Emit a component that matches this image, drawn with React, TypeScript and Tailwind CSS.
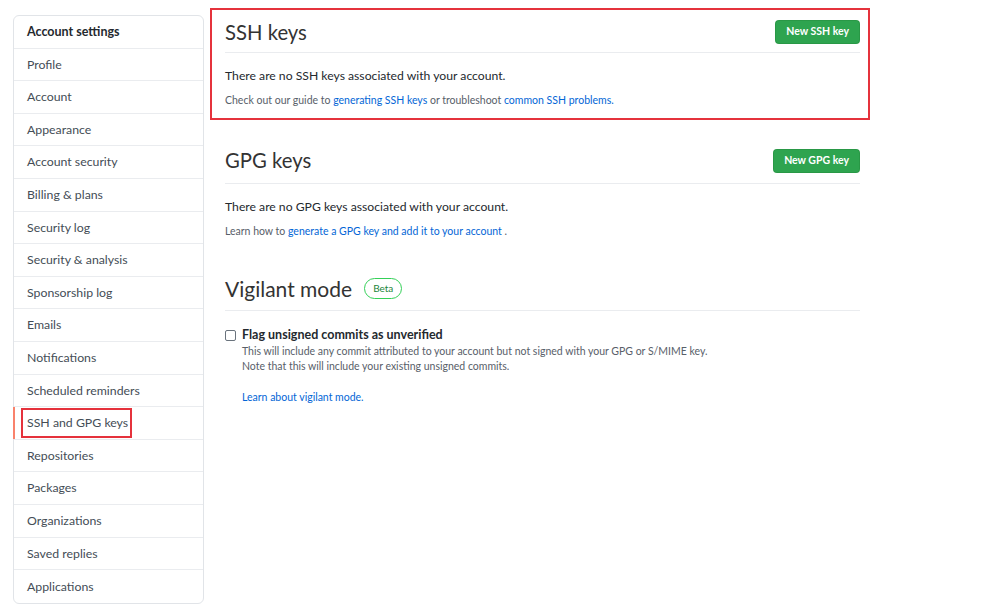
import React from "react";

const navItems = [
  "Profile",
  "Account",
  "Appearance",
  "Account security",
  "Billing & plans",
  "Security log",
  "Security & analysis",
  "Sponsorship log",
  "Emails",
  "Notifications",
  "Scheduled reminders",
  "SSH and GPG keys",
  "Repositories",
  "Packages",
  "Organizations",
  "Saved replies",
  "Applications",
];

const Sidebar = () => (
  <nav className="mt-[15px] ml-[13px] w-[191px] shrink-0 self-start rounded-[6px] border border-[#e1e4e8] bg-white">
    <div className="flex h-[32.6px] items-center border-b border-[#eaecef] px-[13px] pt-[1px] text-[12.5px] font-bold text-[#24292e]">
      Account settings
    </div>
    {navItems.map((item, i) => {
      const active = item === "SSH and GPG keys";
      const last = i === navItems.length - 1;
      return (
        <div
          key={item}
          className={`relative flex h-[32.6px] items-center px-[13px] pt-[1px] text-[12.3px] text-[#444d56] ${
            last ? "" : "border-b border-[#eaecef]"
          }`}
        >
          {active && (
            <>
              <span className="absolute -left-px top-0 bottom-0 w-[2px] bg-[#f9826c]" />
              <span className="absolute left-[7px] top-[1px] h-[30px] w-[111px] border-2 border-[#e5323c]" />
            </>
          )}
          {item}
        </div>
      );
    })}
  </nav>
);

const GreenButton = ({ label }: { label: string }) => (
  <button className="h-[24px] rounded-[4px] border border-[#22863a]/40 bg-[#2ea44f] px-[10px] text-[10.5px] font-bold text-white">
    {label}
  </button>
);

const link = "text-[#0366d6]";

const App = () => {
  return (
    <div
      className="flex min-h-[610px] w-[990px] bg-white text-[#24292e]"
      style={{ fontFamily: 'Lato, "Noto Sans", sans-serif' }}
    >
      <Sidebar />

      <main className="ml-[6px] w-[660px] pt-[8px]">
        {/* SSH keys */}
        <section className="border-2 border-[#e5323c] pl-[13px] pr-[8px] pb-[9px]">
          <div className="flex h-[43px] items-center justify-between border-b border-[#eaecef] pt-[2px]">
            <h2 className="text-[20.3px] font-normal text-[#333]">SSH keys</h2>
            <GreenButton label="New SSH key" />
          </div>
          <p className="mt-[13px] text-[12.2px] leading-[20px]">
            There are no SSH keys associated with your account.
          </p>
          <p className="mt-[5px] text-[10.5px] leading-[18px] text-[#586069]">
            Check out our guide to <span className={link}>generating SSH keys</span> or troubleshoot{" "}
            <span className={link}>common SSH problems</span>
            <span className={link}>.</span>
          </p>
        </section>

        {/* GPG keys */}
        <section className="pl-[15px] pr-[10px]">
          <div className="mt-[18px] flex h-[46px] items-center justify-between border-b border-[#eaecef]">
            <h2 className="text-[20.3px] font-normal text-[#333]">GPG keys</h2>
            <GreenButton label="New GPG key" />
          </div>
          <p className="mt-[13px] text-[12.2px] leading-[20px]">
            There are no GPG keys associated with your account.
          </p>
          <p className="mt-[5px] text-[10.5px] leading-[18px] text-[#586069]">
            Learn how to <span className={link}>generate a GPG key and add it to your account</span> .
          </p>
        </section>

        {/* Vigilant mode */}
        <section className="pl-[15px] pr-[10px]">
          <div className="mt-[27px] flex h-[44px] items-center gap-[12px] border-b border-[#eaecef]">
            <h2 className="text-[21px] font-normal text-[#333]">Vigilant mode</h2>
            <span className="flex h-[21px] items-center rounded-full border border-[#34d058] px-[8px] text-[10px] text-[#22863a]">
              Beta
            </span>
          </div>
          <div className="mt-[15px] flex gap-[6px]">
            <span className="mt-[4px] h-[11px] w-[11px] shrink-0 rounded-[2px] border border-[#6a737d] bg-white" />
            <div>
              <div className="text-[12.5px] font-bold leading-[18px]">
                Flag unsigned commits as unverified
              </div>
              <div className="text-[10.5px] leading-[15px] text-[#586069]">
                This will include any commit attributed to your account but not signed with your GPG or S/MIME key.
              </div>
              <div className="text-[10.5px] leading-[15px] text-[#586069]">
                Note that this will include your existing unsigned commits.
              </div>
              <div className={`mt-[16px] text-[10.5px] leading-[15px] ${link}`}>
                Learn about vigilant mode.
              </div>
            </div>
          </div>
        </section>
      </main>
    </div>
  );
};

export default App;
